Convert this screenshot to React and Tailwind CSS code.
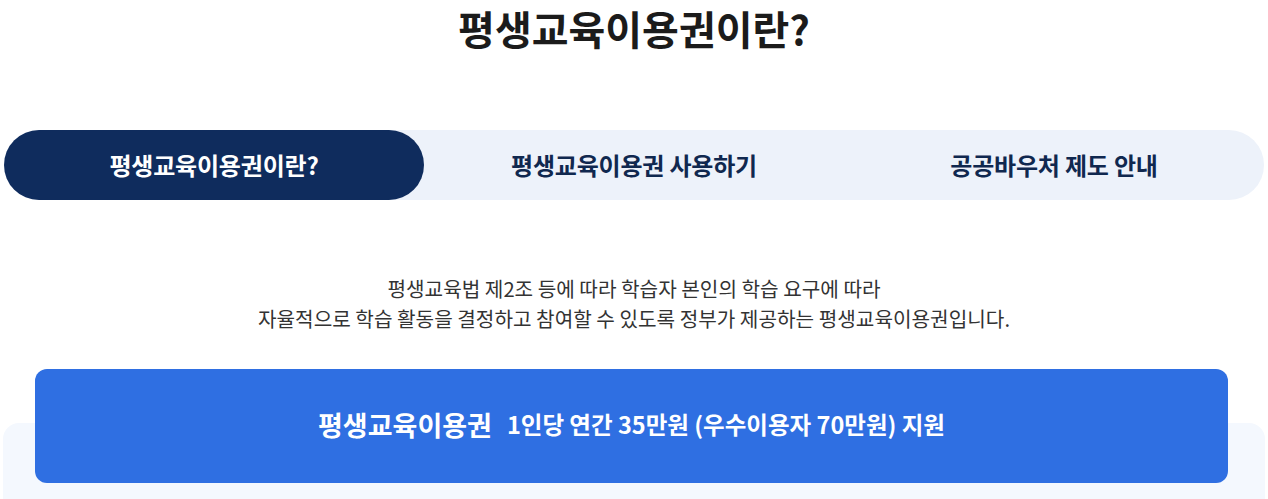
export default function App() {
  const font = { fontFamily: '"Noto Sans CJK KR", "Noto Sans", sans-serif' };
  return (
    <div className="w-[1268px] bg-white overflow-hidden" style={font}>
      <h1 className="text-center text-[40px] leading-[56px] font-bold tracking-[0px] text-[#1b1b1b]">
        평생교육이용권이란?
      </h1>

      <div className="mx-1 mt-[74px] h-[70px] rounded-full bg-[#edf2fa] grid grid-cols-3">
        <div className="rounded-full bg-[#0f2c5d] flex items-center justify-center text-white text-[24px] font-bold tracking-[-0.2px]">
          평생교육이용권이란?
        </div>
        <div className="flex items-center justify-center text-[#10284f] text-[24px] font-bold tracking-[-0.2px]">
          평생교육이용권 사용하기
        </div>
        <div className="flex items-center justify-center text-[#10284f] text-[24px] font-bold tracking-[-0.2px]">
          공공바우처 제도 안내
        </div>
      </div>

      <p className="mt-[74px] text-center text-[20.2px] leading-[30px] text-[#333333]">
        평생교육법 제2조 등에 따라 학습자 본인의 학습 요구에 따라
        <br />
        자율적으로 학습 활동을 결정하고 참여할 수 있도록 정부가 제공하는 평생교육이용권입니다.
      </p>

      <div className="relative z-10 ml-[35px] mt-[35px] mb-[-60px] w-[1193px] h-[114px] rounded-[12px] bg-[#2f6fe2] flex items-center justify-center gap-[15px] text-white">
        <span className="text-[27px] font-bold -mt-[2px]">평생교육이용권</span>
        <span className="text-[23.5px] font-semibold -mt-[2px]">1인당 연간 35만원 (우수이용자 70만원) 지원</span>
      </div>
      <div className="mx-[3px] h-[100px] rounded-t-[16px] bg-[#f4f8fe]" />
    </div>
  );
}
